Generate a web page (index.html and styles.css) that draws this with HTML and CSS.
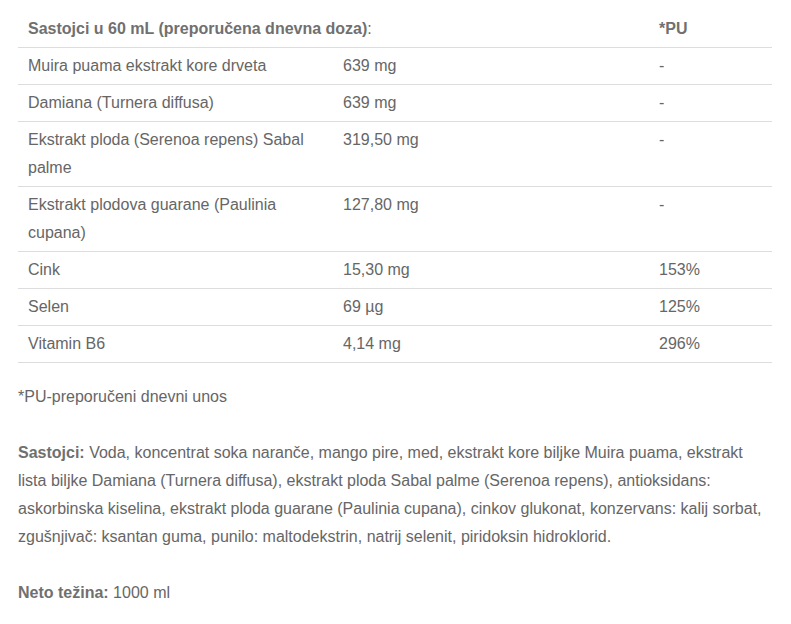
FILE: index.html
```html
<!DOCTYPE html>
<html>
<head>
<meta charset="utf-8">
<link rel="stylesheet" href="styles.css">
</head>
<body>
<div class="content">
  <table class="facts">
    <colgroup>
      <col class="w1">
      <col class="w2">
      <col class="w3">
    </colgroup>
    <thead>
      <tr>
        <th colspan="2"><strong>Sastojci u 60 mL (preporučena dnevna doza)</strong>:</th>
        <th><strong>*PU</strong></th>
      </tr>
    </thead>
    <tbody>
      <tr><td>Muira puama ekstrakt kore drveta</td><td>639 mg</td><td>-</td></tr>
      <tr><td>Damiana (Turnera diffusa)</td><td>639 mg</td><td>-</td></tr>
      <tr><td>Ekstrakt ploda (Serenoa repens) Sabal palme</td><td>319,50 mg</td><td>-</td></tr>
      <tr><td>Ekstrakt plodova guarane (Paulinia cupana)</td><td>127,80 mg</td><td>-</td></tr>
      <tr><td>Cink</td><td>15,30 mg</td><td>153%</td></tr>
      <tr><td>Selen</td><td>69 µg</td><td>125%</td></tr>
      <tr><td>Vitamin B6</td><td>4,14 mg</td><td>296%</td></tr>
    </tbody>
  </table>
  <p class="note">*PU-preporučeni dnevni unos</p>
  <p class="text"><strong>Sastojci:</strong> Voda, koncentrat soka naranče, mango pire, med, ekstrakt kore biljke Muira puama, ekstrakt lista biljke Damiana (Turnera diffusa), ekstrakt ploda Sabal palme (Serenoa repens), antioksidans: askorbinska kiselina, ekstrakt ploda guarane (Paulinia cupana), cinkov glukonat, konzervans: kalij sorbat, zgušnjivač: ksantan guma, punilo: maltodekstrin, natrij selenit, piridoksin hidroklorid.</p>
  <p class="text"><strong>Neto težina:</strong> 1000 ml</p>
</div>
</body>
</html>
```

FILE: styles.css
```css
html, body {
  margin: 0;
  padding: 0;
  background: #ffffff;
}
body {
  font-family: "Liberation Sans", Arial, sans-serif;
  font-size: 16px;
  line-height: 28px;
  color: #666666;
}
.content {
  width: 754px;
  padding: 11px 0 0 18px;
}
.facts {
  width: 754px;
  border-collapse: collapse;
  table-layout: fixed;
}
.w1 { width: 315px; }
.w2 { width: 316px; }
.w3 { width: 123px; }
.facts th, .facts td {
  text-align: left;
  vertical-align: top;
  padding: 4px 10px 4px 10px;
  border-bottom: 1px solid #dddddd;
  font-weight: normal;
}
.facts strong {
  font-weight: bold;
  color: #707070;
}
.note {
  margin: 20px 0 0 0;
}
.text {
  margin: 28px 0 0 0;
}
.text strong {
  color: #707070;
}
```
